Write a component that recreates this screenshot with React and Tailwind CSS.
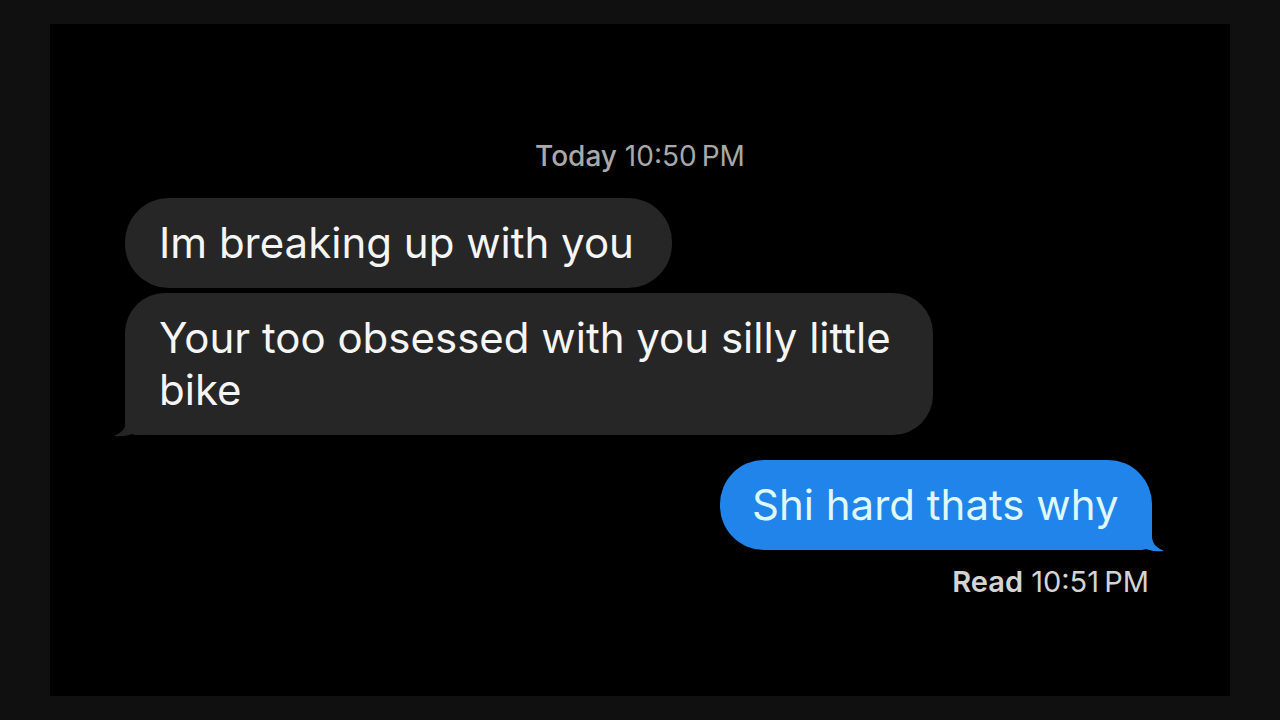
const font = { fontFamily: "Inter, 'Noto Sans', sans-serif" };

const GrayTail = () => (
  <svg
    className="absolute -left-[11px] -bottom-[2px]"
    width="44"
    height="40"
    viewBox="0 0 44 40"
  >
    <path
      d="M12 0 L12 24 C12 32 7 36 0 39 C10 40 18 38 24 34 C28 37 34 38 44 38 L44 0 Z"
      fill="#262626"
    />
  </svg>
);

const BlueTail = () => (
  <svg
    className="absolute -right-[12px] -bottom-[2px]"
    width="44"
    height="40"
    viewBox="0 0 44 40"
  >
    <path
      d="M32 0 L32 24 C32 32 37 36 44 39 C34 40 26 38 20 34 C16 37 10 38 0 38 L0 0 Z"
      fill="#2184ea"
    />
  </svg>
);

export default function App() {
  return (
    <div className="w-full h-screen bg-[#101010] px-[50px] py-[24px]" style={font}>
      <div className="h-full bg-black flex flex-col pt-[115px]">
        {/* timestamp */}
        <div className="text-center text-[28px] leading-[34px] text-[#a9a9a9]">
          <span className="font-medium">Today</span> 10:50&#8239;PM
        </div>

        {/* incoming */}
        <div className="flex flex-col items-start gap-[5px] mt-[25px] pl-[75px]">
          <div className="w-[547px] whitespace-nowrap rounded-[44px] bg-[#262626] px-[34px] py-[19px] text-[42px] leading-[52px] text-[#f5f5f5]">
            Im breaking up with you
          </div>
          <div className="relative w-[808px] whitespace-nowrap rounded-[40px] rounded-bl-[10px] bg-[#262626] px-[34px] py-[19px] text-[42px] leading-[52px] text-[#f5f5f5]">
            Your too obsessed with you silly little
            <br />
            bike
            <GrayTail />
          </div>
        </div>

        {/* outgoing */}
        <div className="flex flex-col items-end mt-[25px] pr-[78px]">
          <div className="relative w-[432px] whitespace-nowrap rounded-[44px] rounded-br-[10px] bg-[#2184ea] px-[32px] py-[19px] text-[42px] leading-[52px] text-[#dff8f8]">
            Shi hard thats why
            <BlueTail />
          </div>
          <div className="mt-[15px] mr-[3px] text-[29px] leading-[34px] text-[#d4d4d4]">
            <span className="font-semibold">Read</span> 10:51&#8239;PM
          </div>
        </div>
      </div>
    </div>
  );
}
